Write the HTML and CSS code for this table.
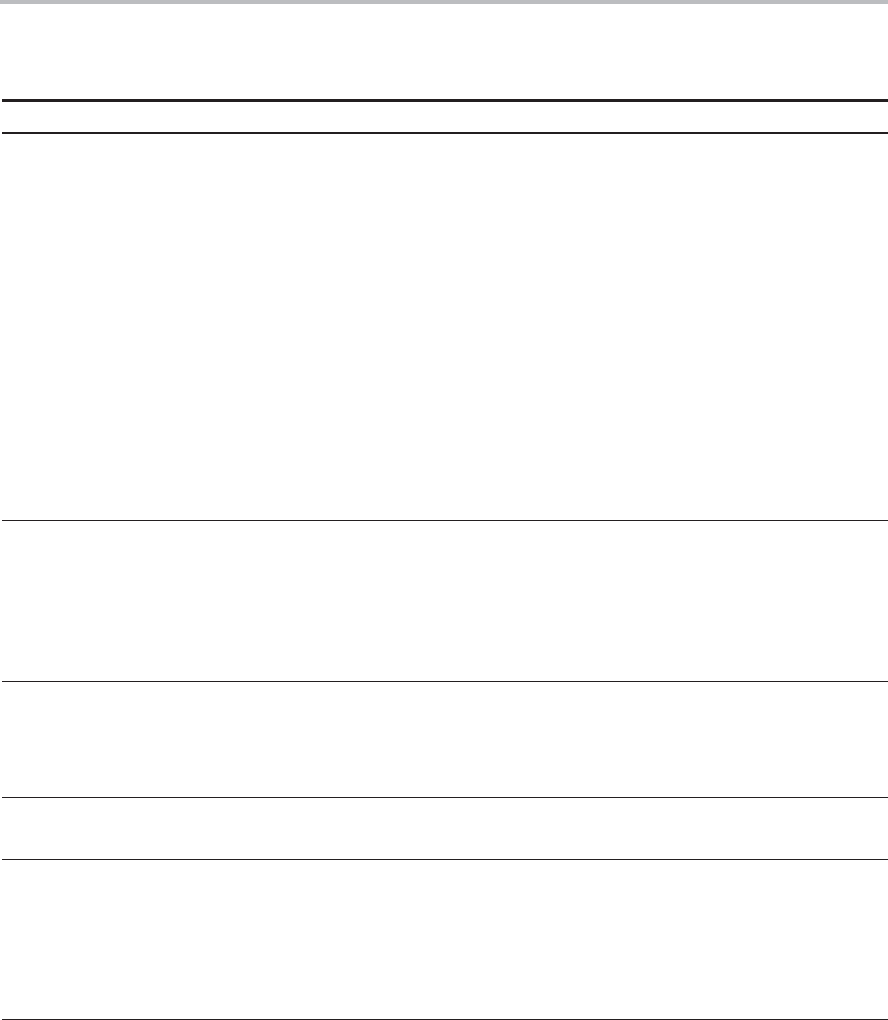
FILE: index.html
```html
<!DOCTYPE html>
<html lang="en">
<head>
<meta charset="utf-8">
<title>Table</title>
<link rel="stylesheet" href="styles.css">
</head>
<body>
<div class="topband"></div>
<div class="sheet">
  <div class="table">
    <div class="thead"></div>
    <div class="row r1"></div>
    <div class="row r2"></div>
    <div class="row r3"></div>
    <div class="row r4"></div>
    <div class="row r5"></div>
  </div>
</div>
</body>
</html>
```
FILE: styles.css
```css
html, body {
  margin: 0;
  padding: 0;
  background: #ffffff;
  font-family: "Liberation Sans", Arial, sans-serif;
}
.topband {
  height: 4px;
  background: #bcbdc0;
}
.sheet {
  padding: 95px 0 0 2px;
}
.table {
  display: flex;
  flex-direction: column;
}
.thead {
  height: 30px;
  border-top: 3px solid #231f20;
  border-bottom: 2px solid #231f20;
}
.row {
  border-bottom: 1px solid #231f20;
}
.r1 { height: 386px; }
.r2 { height: 160px; }
.r3 { height: 115px; }
.r4 { height: 61px; }
.r5 { height: 159px; }
```
